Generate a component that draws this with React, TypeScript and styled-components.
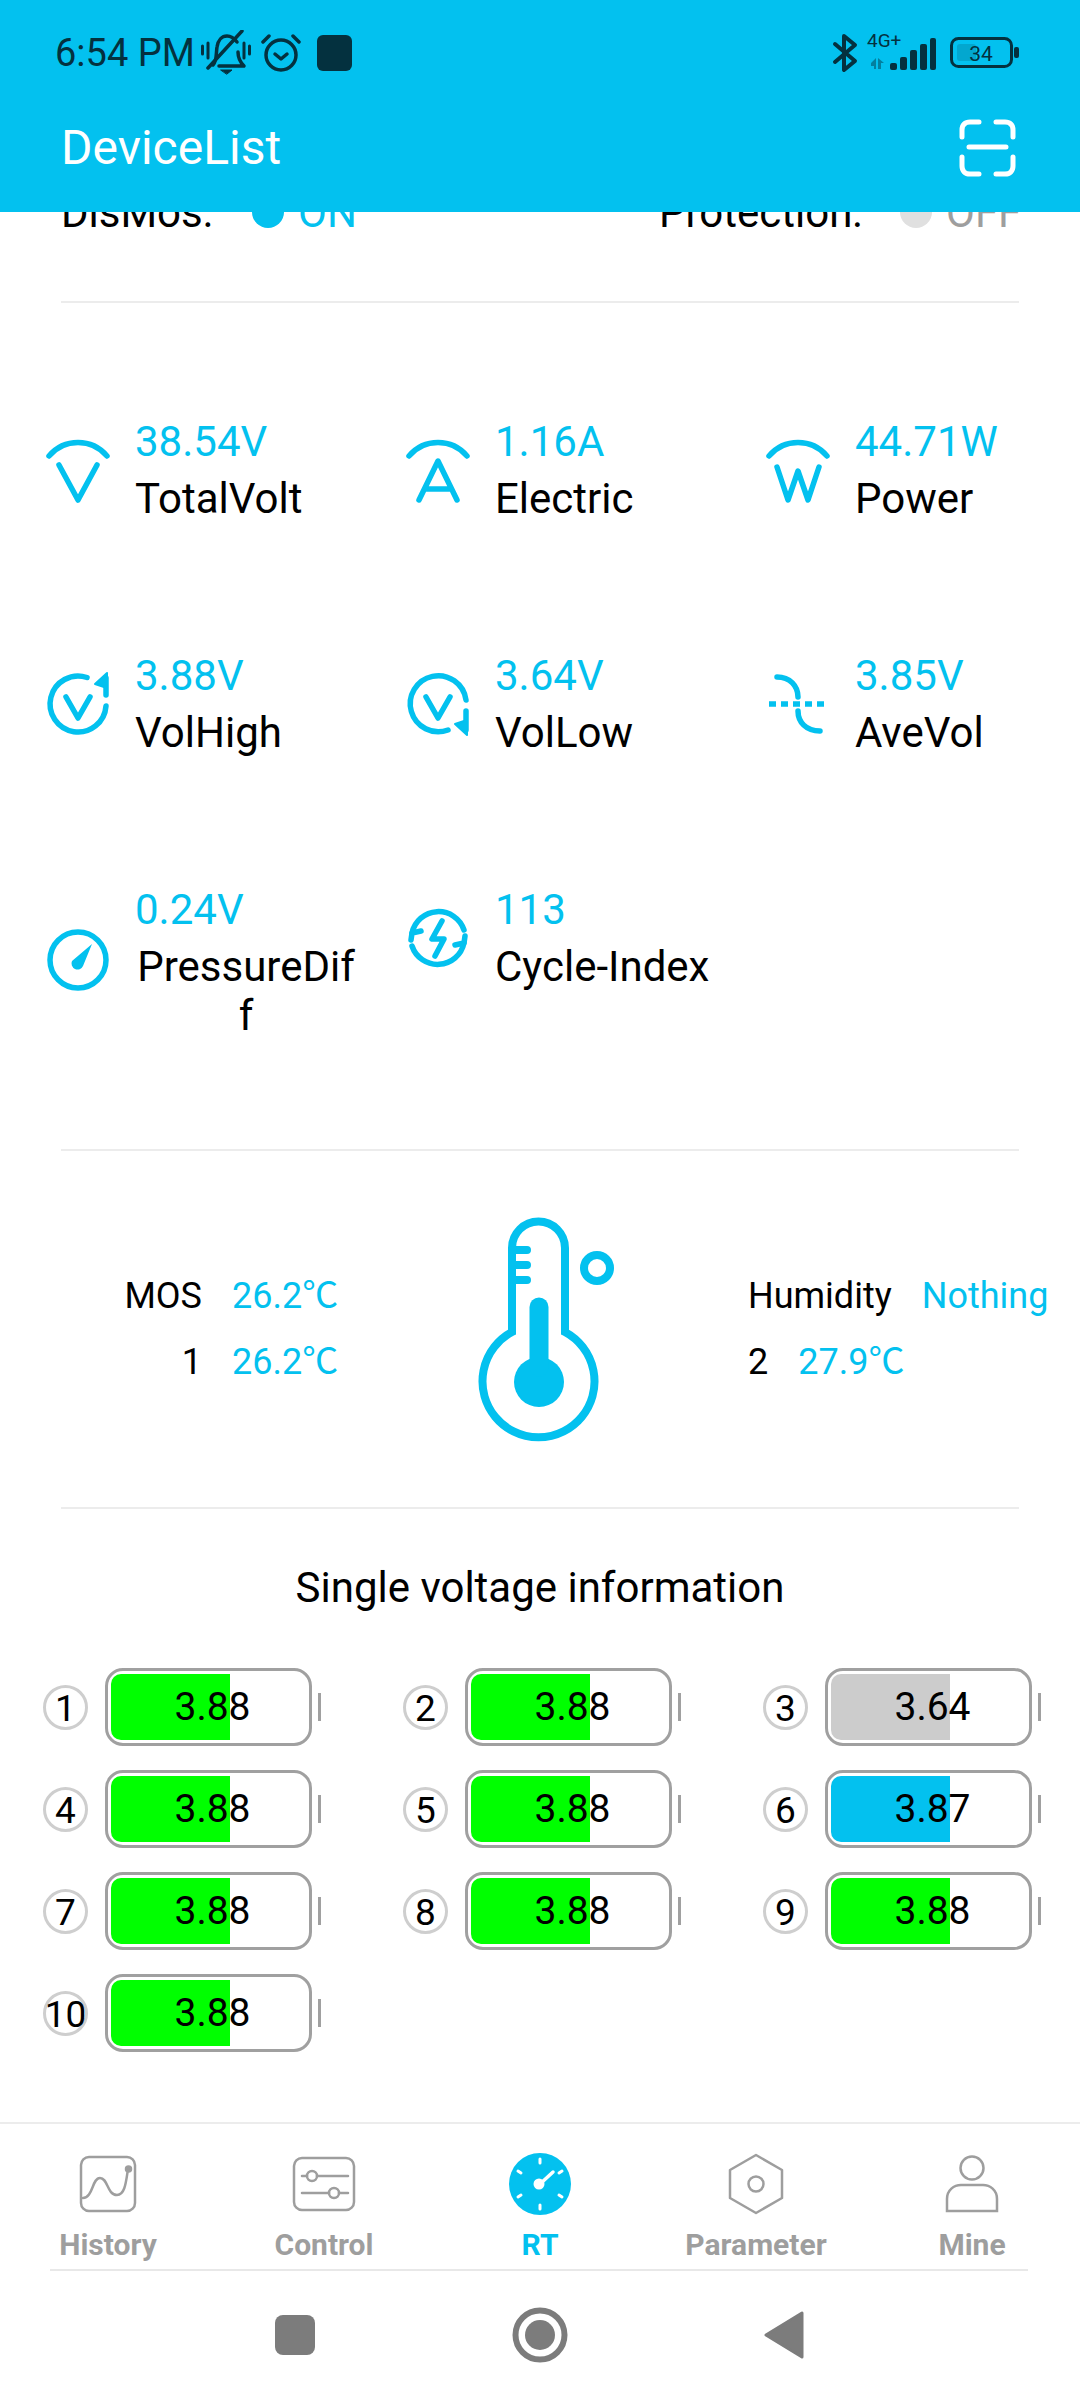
import React from "react";
import styled, { createGlobalStyle } from "styled-components";

const ACCENT = "#03c1ef";
const DARK = "#04313f";
const NAVGRAY = "#9e9e9e";

const Global = createGlobalStyle`
  html, body { margin: 0; padding: 0; background: #fff; }
  body { font-family: Roboto, "Noto Sans CJK SC", sans-serif; }
  * { box-sizing: border-box; }
`;

const Page = styled.div`
  width: 1080px;
  height: 2400px;
  display: flex;
  flex-direction: column;
  overflow: hidden;
  background: #fff;
`;

const Header = styled.header`
  height: 212px;
  background: ${ACCENT};
  flex: none;
  display: flex;
  flex-direction: column;
`;

const StatusBar = styled.div`
  height: 106px;
  display: flex;
  align-items: center;
  justify-content: space-between;
  padding: 0 60px 0 55px;
  color: ${DARK};
`;

const StatusLeft = styled.div`
  display: flex;
  align-items: center;
  gap: 10px;
`;

const StatusRight = styled.div`
  display: flex;
  align-items: center;
  gap: 12px;
`;

const Clock = styled.span`
  font-size: 38px;
  line-height: 40px;
  margin-right: -4px;
`;

const Toolbar = styled.div`
  flex: 1;
  display: flex;
  align-items: center;
  justify-content: space-between;
  padding: 0 64px 22px 61px;
  color: #fff;
`;

const ToolbarTitle = styled.h1`
  margin: 0;
  font-size: 48px;
  font-weight: 400;
  line-height: 56px;
`;

const NetBlock = styled.div`
  position: relative;
  width: 68px;
  height: 34px;
`;

const NetLabel = styled.span`
  position: absolute;
  left: -3px;
  top: -5px;
  font-size: 19px;
  line-height: 20px;
  color: ${DARK};
`;

const Content = styled.main`
  flex: 1;
  display: flex;
  flex-direction: column;
  min-height: 0;
`;

const ClippedRow = styled.div`
  height: 23px;
  overflow: hidden;
  display: flex;
  align-items: flex-end;
  padding-left: 61px;
  font-size: 42px;
  line-height: 44px;
`;

const ClipLabel = styled.span<{ $w: number }>`
  width: ${(p) => p.$w}px;
  flex: none;
  color: #000;
`;

const Dot = styled.span<{ $on: boolean }>`
  width: 32px;
  height: 32px;
  margin-bottom: 7px;
  border-radius: 50%;
  flex: none;
  background: ${(p) => (p.$on ? ACCENT : "#e0e0e0")};
`;

const ClipValue = styled.span<{ $on: boolean; $w: number }>`
  width: ${(p) => p.$w}px;
  flex: none;
  margin-left: 14px;
  color: ${(p) => (p.$on ? ACCENT : "#9e9e9e")};
`;

const Divider = styled.hr<{ $top?: number }>`
  flex: none;
  height: 2px;
  border: 0;
  margin: ${(p) => p.$top ?? 0}px 61px 0;
  background: #ececec;
`;

const MetricGrid = styled.section`
  flex: none;
  height: 846px;
  display: grid;
  grid-template-columns: repeat(3, 360px);
  grid-auto-rows: 234px;
  padding-top: 114px;
`;

const Metric = styled.div`
  display: flex;
  align-items: flex-start;
  padding-left: 42px;
  gap: 21px;
`;

const MetricBody = styled.div`
  display: flex;
  flex-direction: column;
  align-items: flex-start;
  width: 222px;
`;

const IconSlot = styled.div`
  flex: none;
  width: 72px;
  height: 106px;
  display: flex;
  align-items: center;
  justify-content: center;
`;

const IconSlotLow = styled(IconSlot)`
  height: 150px;
`;

const Value = styled.div`
  color: ${ACCENT};
  font-size: 42px;
  line-height: 49px;
  margin-bottom: 8px;
`;

const Label = styled.div`
  color: #000;
  font-size: 42px;
  line-height: 49px;
  max-width: 222px;
  text-align: center;
  word-break: break-all;
`;

const TempSection = styled.section`
  flex: none;
  height: 356px;
  display: grid;
  grid-template-columns: 470px 146px 1fr;
  align-items: center;
`;

const TempLeft = styled.div`
  display: grid;
  grid-template-columns: 202px auto;
  column-gap: 30px;
  row-gap: 22px;
  font-size: 36px;
  line-height: 44px;
`;

const TempRight = styled.div`
  display: flex;
  flex-direction: column;
  gap: 22px;
  padding-left: 132px;
  font-size: 36px;
  line-height: 44px;
`;

const TempRow = styled.div`
  display: flex;
  gap: 30px;
  white-space: nowrap;
`;

const TempKey = styled.span`
  text-align: right;
  color: #000;
`;

const TempVal = styled.span`
  color: ${ACCENT};
  white-space: nowrap;
`;

const ThermoWrap = styled.div`
  display: flex;
  padding-top: 6px;
`;

const CellTitle = styled.h2`
  flex: none;
  margin: 57px 0 0;
  text-align: center;
  font-size: 42px;
  font-weight: 400;
  line-height: 44px;
  color: #000;
`;

const CellGrid = styled.section`
  flex: none;
  margin-top: 58px;
  display: grid;
  grid-template-columns: repeat(3, 360px);
  grid-auto-rows: 78px;
  row-gap: 24px;
`;

const Cell = styled.div`
  display: flex;
  align-items: center;
  padding-left: 43px;
`;

const CellNo = styled.div`
  flex: none;
  width: 45px;
  height: 45px;
  padding-top: 3px;
  border: 3px solid #cecece;
  border-radius: 50%;
  display: flex;
  align-items: center;
  justify-content: center;
  font-size: 37px;
  color: #000;
  white-space: nowrap;
  margin-right: 17px;
`;

const Battery = styled.div`
  position: relative;
  flex: none;
  width: 207px;
  height: 78px;
  padding-left: 8px;
  border: 3px solid #a0a0a0;
  border-radius: 18px;
  display: flex;
  align-items: center;
  justify-content: center;
  font-size: 39px;
  color: #000;
`;

const BatteryFill = styled.div<{ $color: string }>`
  position: absolute;
  left: 3px;
  top: 3px;
  bottom: 3px;
  width: 119px;
  background: ${(p) => p.$color};
  border-radius: 10px 0 0 10px;
`;

const BatteryText = styled.span`
  position: relative;
`;

const BatteryCap = styled.div`
  flex: none;
  width: 3px;
  height: 28px;
  margin-left: 6px;
  background: #a0a0a0;
`;

const TabBar = styled.nav`
  flex: none;
  margin-top: auto;
  height: 149px;
  border-top: 2px solid #ececec;
  display: flex;
  flex-direction: column;
`;

const TabRow = styled.div`
  flex: 1;
  display: grid;
  grid-template-columns: repeat(5, 216px);
`;

const Tab = styled.div<{ $active?: boolean }>`
  display: flex;
  flex-direction: column;
  align-items: center;
  padding-top: 27px;
  color: ${(p) => (p.$active ? ACCENT : NAVGRAY)};
  font-size: 30px;
  font-weight: 700;
  line-height: 36px;
`;

const TabIcon = styled.div`
  height: 66px;
  margin-bottom: 10px;
  display: flex;
  align-items: center;
  justify-content: center;
`;

const TabRule = styled.div`
  flex: none;
  height: 2px;
  margin: 0 52px 0 50px;
  background: #e8e8e8;
`;

const SystemNav = styled.div`
  flex: none;
  height: 129px;
  padding-bottom: 2px;
  display: grid;
  grid-template-columns: 275px 40px 196px 58px 195px 40px;
  align-items: center;
`;

const SysItem = styled.div<{ $col: number }>`
  grid-column: ${(p) => p.$col};
  display: flex;
  align-items: center;
  justify-content: center;
`;

const I = {
  stroke: ACCENT,
  strokeWidth: 5.5,
  fill: "none",
  strokeLinecap: "round" as const,
  strokeLinejoin: "round" as const,
};

const Ico72: React.FC<{ children: React.ReactNode }> = ({ children }) => (
  <svg width="72" height="72" viewBox="0 0 72 72" {...I}>
    {children}
  </svg>
);

const Arc = () => <path d="M7 22A38 38 0 0 1 65 22" />;

const VoltIcon = () => (
  <Ico72>
    <Arc />
    <path d="M17 31L36 66L55 31" />
  </Ico72>
);
const AmpIcon = () => (
  <Ico72>
    <Arc />
    <path d="M17 66L36 27L55 66M23 55H49" />
  </Ico72>
);
const WattIcon = () => (
  <Ico72>
    <Arc />
    <path d="M15 33L26 66L36 37L46 66L57 33" />
  </Ico72>
);
const HighIcon = () => (
  <Ico72>
    <path d="M45 9.5A28 28 0 1 0 64 38" />
    <path d="M24 29L36 50L48 29" />
    <path d="M64 10V27" />
    <path d="M65 5L65 20L53 16Z" fill={ACCENT} strokeWidth="2" />
  </Ico72>
);
const LowIcon = () => (
  <Ico72>
    <path d="M64 32A28 28 0 1 0 46 62" />
    <path d="M24 29L36 50L48 29" />
    <path d="M64 43V62" />
    <path d="M65 67L65 52L53 56Z" fill={ACCENT} strokeWidth="2" />
  </Ico72>
);
const AvgIcon = () => (
  <Ico72>
    <path d="M15 9C28 9 36 18 36 29" />
    <path d="M7 36H67" strokeDasharray="7 5" strokeLinecap="butt" />
    <path d="M36 43C36 54 44 63 58 63" />
  </Ico72>
);
const GaugeIcon = () => (
  <Ico72>
    <circle cx="36" cy="36" r="28" />
    <path d="M50 20L41 42A6 6 0 0 1 30 37Z" fill={ACCENT} stroke="none" />
  </Ico72>
);
const CycleIcon = () => (
  <Ico72>
    <path d="M10 31A27 27 0 0 1 62 28" />
    <path d="M9 38L10 31L19 29" />
    <path d="M62 41A27 27 0 0 1 10 44" />
    <path d="M63 34L62 41L53 43" />
    <path d="M40 19L30 37H42L33 54" />
  </Ico72>
);

const Thermometer = () => (
  <svg width="146" height="230" viewBox="0 0 146 230" fill="none" stroke={ACCENT} strokeWidth="8">
    <path d="M42 115V31A26 26 0 0 1 95 31V115A56 56 0 1 1 42 115Z" />
    <path d="M42 33H57M42 48H57M42 63H57" strokeLinecap="round" />
    <circle cx="69" cy="165" r="25" fill={ACCENT} stroke="none" />
    <path d="M69 90V150" strokeWidth="19" strokeLinecap="round" />
    <circle cx="127" cy="51" r="13" />
  </svg>
);

const NavStroke = { fill: "none", stroke: NAVGRAY, strokeWidth: 2.5, strokeLinecap: "round" as const, strokeLinejoin: "round" as const };

const HistoryIcon = () => (
  <svg width="58" height="60" viewBox="0 0 58 60" {...NavStroke}>
    <rect x="2" y="3" width="54" height="54" rx="8" />
    <path d="M4 44C14 44 13 24 21 24C29 24 28 41 38 41C46 41 47 28 49 15" />
    <circle cx="49.5" cy="15" r="2.5" fill={NAVGRAY} />
  </svg>
);
const ControlIcon = () => (
  <svg width="64" height="56" viewBox="0 0 64 56" {...NavStroke}>
    <rect x="2" y="2" width="60" height="52" rx="8" />
    <path d="M10 20H15M25 20H56M10 37H37M47 37H56" />
    <circle cx="20" cy="20" r="5" />
    <circle cx="42" cy="37" r="5" />
  </svg>
);
const RtIcon = () => (
  <svg width="62" height="62" viewBox="0 0 62 62">
    <circle cx="31" cy="31" r="31" fill={ACCENT} />
    <g stroke="#fff" strokeWidth="3" strokeLinecap="round" fill="none">
      <path d="M31 6V10M31 52V56M9 18L12 20M50 42L53 44M9 44L12 42M50 20L53 18" />
      <path d="M31 31L44 19" strokeWidth="3.5" />
    </g>
    <circle cx="30" cy="31" r="5.5" fill="#fff" />
  </svg>
);
const ParamIcon = () => (
  <svg width="56" height="62" viewBox="0 0 56 62" {...NavStroke}>
    <path d="M28 2L54 17V45L28 60L2 45V17Z" />
    <circle cx="28" cy="31" r="7.5" />
  </svg>
);
const MineIcon = () => (
  <svg width="56" height="60" viewBox="0 0 56 60" {...NavStroke}>
    <circle cx="28" cy="14" r="11.5" />
    <path d="M3 57V45C3 36 10 31 17 31H39C46 31 53 36 53 45V57Z" strokeLinejoin="miter" />
  </svg>
);

const MuteIcon = () => (
  <svg width="50" height="46" viewBox="0 0 50 46" fill="none" stroke={DARK} strokeWidth="3.5" strokeLinecap="round" strokeLinejoin="round">
    <path d="M12 35C16 31 15 23 16 17C17 10 21 6 26 6C30 6 33 8 36 12M37 22C37 28 39 32 43 36H18" />
    <path d="M41 1L7 38" />
    <path d="M20 40H31L26 44Z" fill={DARK} strokeWidth="1" />
    <path d="M1.5 16V24M7 13V28M43 13V28M48.5 16V24" strokeWidth="3" />
  </svg>
);
const AlarmIcon = () => (
  <svg width="40" height="40" viewBox="0 0 40 40" fill="none" stroke={DARK} strokeWidth="3.5" strokeLinecap="round" strokeLinejoin="round">
    <circle cx="20" cy="22" r="15" />
    <path d="M2 9L8 3M38 9L32 3" />
    <path d="M14 21L20 26L26 21" />
  </svg>
);
const NotifSquare = styled.div`
  width: 35px;
  height: 36px;
  border-radius: 6px;
  background: ${DARK};
  margin-left: 6px;
`;
const BluetoothIcon = () => (
  <svg width="26" height="40" viewBox="0 0 26 40" fill="none" stroke={DARK} strokeWidth="4" strokeLinecap="round" strokeLinejoin="round">
    <path d="M3 11L23 28L12 37V3L23 12L3 29" />
  </svg>
);
const NetIcon = () => (
  <svg width="68" height="34" viewBox="0 0 68 34" style={{ position: "absolute", left: 0, top: 0 }}>
    <path d="M1 27L6 22V33H4V30H1ZM8 33V22L14 27H11V33Z" fill={DARK} opacity="0.45" />
    <rect x="20" y="27" width="7" height="7" rx="2" fill={DARK} />
    <rect x="30" y="21" width="7" height="13" rx="2" fill={DARK} />
    <rect x="40" y="14" width="7" height="20" rx="2" fill={DARK} />
    <rect x="50" y="8" width="7" height="26" rx="2" fill={DARK} />
    <rect x="60" y="2" width="6" height="32" rx="2" fill={DARK} />
  </svg>
);
const BatteryStatus = () => (
  <svg width="70" height="32" viewBox="0 0 70 32">
    <rect x="1.5" y="1.5" width="60" height="28" rx="7" fill="none" stroke={DARK} strokeWidth="3" />
    <rect x="7" y="7" width="19" height="17" rx="3" fill={DARK} opacity="0.18" />
    <rect x="64" y="10" width="5" height="11" rx="2" fill={DARK} />
    <text x="31" y="24" textAnchor="middle" fontSize="21" fill={DARK} fontFamily="Roboto">34</text>
  </svg>
);
const ScanIcon = () => (
  <svg width="57" height="58" viewBox="0 0 57 58" fill="none" stroke="#fff" strokeWidth="5" strokeLinecap="round" strokeLinejoin="round">
    <path d="M3 18V11C3 6 6 3 11 3H20M37 3H46C51 3 54 6 54 11V18M3 38V47C3 52 6 55 11 55H20M37 55H46C51 55 54 52 54 47V38M10 28H47" />
  </svg>
);

const metrics = [
  { v: "38.54V", l: "TotalVolt", i: <VoltIcon /> },
  { v: "1.16A", l: "Electric", i: <AmpIcon /> },
  { v: "44.71W", l: "Power", i: <WattIcon /> },
  { v: "3.88V", l: "VolHigh", i: <HighIcon /> },
  { v: "3.64V", l: "VolLow", i: <LowIcon /> },
  { v: "3.85V", l: "AveVol", i: <AvgIcon /> },
  { v: "0.24V", l: "PressureDiff", i: <GaugeIcon />, low: true },
  { v: "113", l: "Cycle-Index", i: <CycleIcon /> },
];

const GREEN = "#00ff00";
const cells = [
  { v: "3.88", c: GREEN }, { v: "3.88", c: GREEN }, { v: "3.64", c: "#cccccc" },
  { v: "3.88", c: GREEN }, { v: "3.88", c: GREEN }, { v: "3.87", c: ACCENT },
  { v: "3.88", c: GREEN }, { v: "3.88", c: GREEN }, { v: "3.88", c: GREEN },
  { v: "3.88", c: GREEN },
];

const tabs = [
  { l: "History", i: <HistoryIcon /> },
  { l: "Control", i: <ControlIcon /> },
  { l: "RT", i: <RtIcon />, active: true },
  { l: "Parameter", i: <ParamIcon /> },
  { l: "Mine", i: <MineIcon /> },
];

export default function App() {
  return (
    <Page>
      <Global />
      <Header>
        <StatusBar>
          <StatusLeft>
            <Clock>6:54 PM</Clock>
            <MuteIcon />
            <AlarmIcon />
            <NotifSquare />
          </StatusLeft>
          <StatusRight>
            <BluetoothIcon />
            <NetBlock>
              <NetIcon />
              <NetLabel>4G+</NetLabel>
            </NetBlock>
            <BatteryStatus />
          </StatusRight>
        </StatusBar>
        <Toolbar>
          <ToolbarTitle>DeviceList</ToolbarTitle>
          <ScanIcon />
        </Toolbar>
      </Header>
      <Content>
        <ClippedRow>
          <ClipLabel $w={191}>DisMos:</ClipLabel>
          <Dot $on />
          <ClipValue $on $w={361}>ON</ClipValue>
          <ClipLabel $w={241}>Protection:</ClipLabel>
          <Dot $on={false} />
          <ClipValue $on={false} $w={80}>OFF</ClipValue>
        </ClippedRow>
        <Divider $top={66} />
        <MetricGrid>
          {metrics.map((m) => {
            const Slot = m.low ? IconSlotLow : IconSlot;
            return (
              <Metric key={m.l}>
                <Slot>{m.i}</Slot>
                <MetricBody>
                  <Value>{m.v}</Value>
                  <Label>{m.l}</Label>
                </MetricBody>
              </Metric>
            );
          })}
        </MetricGrid>
        <Divider />
        <TempSection>
          <TempLeft>
            <TempKey>MOS</TempKey>
            <TempVal>26.2℃</TempVal>
            <TempKey>1</TempKey>
            <TempVal>26.2℃</TempVal>
          </TempLeft>
          <ThermoWrap>
            <Thermometer />
          </ThermoWrap>
          <TempRight>
            <TempRow>
              <TempKey>Humidity</TempKey>
              <TempVal>Nothing</TempVal>
            </TempRow>
            <TempRow>
              <TempKey>2</TempKey>
              <TempVal>27.9℃</TempVal>
            </TempRow>
          </TempRight>
        </TempSection>
        <Divider />
        <CellTitle>Single voltage information</CellTitle>
        <CellGrid>
          {cells.map((c, i) => (
            <Cell key={i}>
              <CellNo>{i + 1}</CellNo>
              <Battery>
                <BatteryFill $color={c.c} />
                <BatteryText>{c.v}</BatteryText>
              </Battery>
              <BatteryCap />
            </Cell>
          ))}
        </CellGrid>
        <TabBar>
          <TabRow>
            {tabs.map((t) => (
              <Tab key={t.l} $active={t.active}>
                <TabIcon>{t.i}</TabIcon>
                {t.l}
              </Tab>
            ))}
          </TabRow>
          <TabRule />
        </TabBar>
        <SystemNav>
          <SysItem $col={2}>
            <svg width="40" height="40" viewBox="0 0 40 40"><rect width="40" height="40" rx="8" fill="#7c7c7c" /></svg>
          </SysItem>
          <SysItem $col={4}>
            <svg width="58" height="58" viewBox="0 0 58 58" fill="none"><circle cx="29" cy="29" r="24.5" stroke="#7c7c7c" strokeWidth="6" /><circle cx="29" cy="29" r="15" fill="#7c7c7c" /></svg>
          </SysItem>
          <SysItem $col={6}>
            <svg width="40" height="48" viewBox="0 0 40 48"><path d="M2 24L38 2V46Z" fill="#7c7c7c" stroke="#7c7c7c" strokeWidth="3" strokeLinejoin="round" /></svg>
          </SysItem>
        </SystemNav>
      </Content>
    </Page>
  );
}
